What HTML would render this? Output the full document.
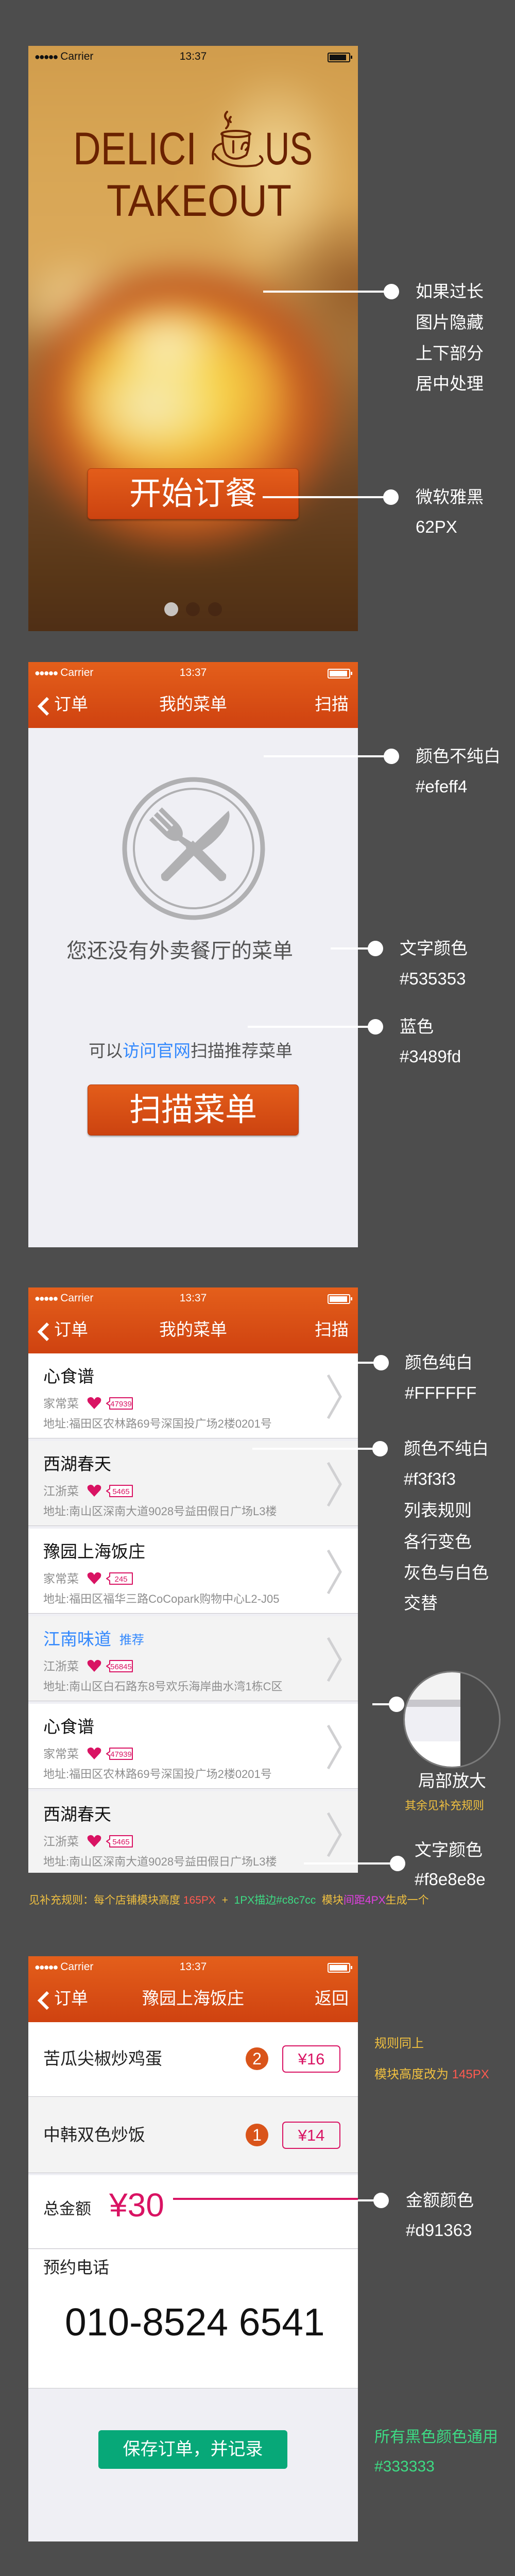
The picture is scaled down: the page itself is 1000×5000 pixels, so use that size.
<!DOCTYPE html>
<html><head><meta charset="utf-8">
<style>
*{margin:0;padding:0;box-sizing:border-box}
body{width:1000px;height:5000px;background:#4d4d4d;position:relative;overflow:hidden;font-family:"Liberation Sans","Noto Sans CJK SC",sans-serif}
.a{position:absolute}
.ph{position:absolute;left:55px;width:640px;height:1136px;overflow:hidden}
.t{position:absolute;white-space:nowrap}
.ann{position:absolute;white-space:nowrap;color:#fff;font-size:33px;line-height:40px;height:40px}
.ln{position:absolute;height:4px;background:#fff}
.dot{position:absolute;width:30px;height:30px;border-radius:50%;background:#fff}
.nav{position:absolute;left:0;top:0;width:640px;height:128px;background:linear-gradient(#e45f1b,#cf4210)}
.st{position:absolute;top:10px;height:22px;line-height:22px;font-size:21px;color:#fff}
.navt{position:absolute;top:62px;height:40px;line-height:40px;font-size:33px;color:#fff}
.btn{position:absolute;border-radius:7px;background:linear-gradient(#e35d1a,#cc4310);border:1px solid #b53a0c;box-shadow:0 2px 3px rgba(0,0,0,.35);color:#fff;text-align:center}
.row{position:absolute;left:0;width:640px;height:165px;border-bottom:1px solid #c8c7cc}
.rt{position:absolute;left:29px;top:25px;font-size:33px;line-height:40px;color:#111}
.rc{position:absolute;left:29px;top:84px;font-size:23px;line-height:26px;color:#8e8e8e}
.ra{position:absolute;left:29px;top:124px;font-size:22px;line-height:26px;color:#8e8e8e;white-space:nowrap}
</style></head><body>

<!-- ================= SCREEN 1 ================= -->
<div class="ph" style="top:89px;background:#8a5a2a">
  <div class="a" style="left:-60px;top:-60px;width:760px;height:1260px;filter:blur(26px);
   background:
   radial-gradient(ellipse 120px 90px at 330px 640px,rgba(250,240,200,.9),rgba(250,240,200,0)),
   radial-gradient(ellipse 150px 110px at 300px 760px,rgba(245,236,200,.85),rgba(245,236,200,0)),
   radial-gradient(ellipse 230px 190px at 340px 730px,#fae05a 0%,#f6cf45 45%,rgba(240,170,50,0) 100%),
   radial-gradient(ellipse 330px 300px at 360px 760px,#eeaa35 0%,#e28a2c 55%,#c0561e 75%,rgba(110,50,20,0) 100%),
   radial-gradient(ellipse 140px 200px at 540px 300px,rgba(250,230,170,.8),rgba(250,230,170,0)),
   radial-gradient(ellipse 140px 100px at 150px 560px,rgba(245,215,150,.9),rgba(245,215,150,0)),
   radial-gradient(ellipse 200px 160px at 700px 520px,rgba(120,60,20,.7),rgba(120,60,20,0)),
   linear-gradient(#cf9a4a 0%,#d8a655 22%,#dba95a 38%,#9a6a36 55%,#6b4424 72%,#5a3818 85%,#4a2a14 100%)"></div>
  <div class="st" style="left:12px;color:#111"><span style="letter-spacing:-2px;font-size:18px">●●●●●</span> Carrier</div>
  <div class="st" style="left:290px;width:60px;text-align:center;color:#111">13:37</div>
  <div class="a" style="left:581px;top:13px;width:44px;height:19px;border:2px solid #111;border-radius:3px;padding:2px"><div style="width:32px;height:11px;background:#111"></div></div>
  <div class="a" style="left:626px;top:19px;width:3px;height:6px;background:#111"></div>
  <svg class="a" style="left:0;top:0" width="640" height="400">
    <g fill="#6a2200" font-family="Liberation Sans, sans-serif">
      <text x="87" y="230" font-size="89" textLength="240" lengthAdjust="spacingAndGlyphs">DELICI</text>
      <text x="459" y="230" font-size="89" textLength="93" lengthAdjust="spacingAndGlyphs">US</text>
      <text x="152" y="330" font-size="86" textLength="359" lengthAdjust="spacingAndGlyphs">TAKEOUT</text>
    </g>
    <g fill="none" stroke="#6a2200" stroke-width="4" stroke-linecap="round">
      <path d="M386 128 q-8 8 0 16 q6 8 -2 16"/>
      <path d="M393 138 q-5 5 0 10"/>
      <ellipse cx="403" cy="171" rx="28" ry="6"/>
      <path d="M377 172 q0 30 8 40 q16 14 38 0 q6 -12 6 -40"/>
      <path d="M398 185 v22"/>
      <path d="M414 200 q2 -14 10 -12 q8 4 -2 14"/>
      <path d="M375 190 q-20 6 -16 30 M362 210 q20 30 80 22 q20 -8 8 -18"/>
    </g>
  </svg>
  <div class="btn" style="left:115px;top:820px;width:410px;height:99px;font-size:62px;line-height:97px">开始订餐</div>
  <div class="a" style="left:264px;top:1080px;width:27px;height:27px;border-radius:50%;background:#c8c4c0"></div>
  <div class="a" style="left:306px;top:1080px;width:27px;height:27px;border-radius:50%;background:rgba(60,30,15,.5)"></div>
  <div class="a" style="left:349px;top:1080px;width:27px;height:27px;border-radius:50%;background:rgba(60,30,15,.5)"></div>
</div>
<div class="ln" style="left:511px;top:564px;width:250px"></div><div class="dot" style="left:745px;top:551px"></div>
<div class="ann" style="left:807px;top:546px">如果过长</div>
<div class="ann" style="left:807px;top:606px">图片隐藏</div>
<div class="ann" style="left:807px;top:666px">上下部分</div>
<div class="ann" style="left:807px;top:725px">居中处理</div>
<div class="ln" style="left:510px;top:963px;width:250px"></div><div class="dot" style="left:744px;top:950px"></div>
<div class="ann" style="left:807px;top:945px">微软雅黑</div>
<div class="ann" style="left:807px;top:1003px">62PX</div>

<!-- ================= SCREEN 2 ================= -->
<div class="ph" style="top:1285px;background:#efeff4">
  <div class="nav"></div>
  <div class="st" style="left:12px"><span style="letter-spacing:-2px;font-size:18px">●●●●●</span> Carrier</div>
  <div class="st" style="left:290px;width:60px;text-align:center">13:37</div>
  <div class="a" style="left:581px;top:13px;width:44px;height:19px;border:2px solid #fff;border-radius:3px;padding:2px"><div style="width:34px;height:11px;background:#fff"></div></div>
  <div class="a" style="left:626px;top:19px;width:3px;height:6px;background:#fff"></div>
  <svg class="a" style="left:14px;top:66px" width="30" height="40"><path d="M24 4 L8 20 L24 36" fill="none" stroke="#fff" stroke-width="6"/></svg>
  <div class="navt" style="left:50px">订单</div>
  <div class="navt" style="left:250px;width:140px;text-align:center">我的菜单</div>
  <div class="navt" style="right:18px">扫描</div>
  <svg class="a" style="left:181px;top:222px" width="280" height="280" viewBox="-140 -140 280 280">
    <circle r="134" fill="none" stroke="#b0b0b2" stroke-width="9"/>
    <circle r="116" fill="none" stroke="#b0b0b2" stroke-width="4"/>
    <g fill="#b0b0b2">
      <g transform="rotate(45)">
        <path d="M-4 -100 C 20 -90 22 -40 14 -8 L 4 -4 L -6 -4 Z"/>
        <path d="M-10 0 H10 L9 80 Q0 92 -9 80 Z"/>
      </g>
      <g transform="rotate(-45)">
        <path d="M-22 -100 h9 v40 h4 v-40 h9 v40 h4 v-40 h9 v40 q0 22 -12 28 L6 -10 h-14 L-10 -32 q-12 -6 -12 -28 Z"/>
        <path d="M-10 -12 H10 L9 80 Q0 92 -9 80 Z"/>
      </g>
    </g>
  </svg>
  <div class="t" style="left:74px;top:540px;font-size:40px;line-height:42px;color:#535353">您还没有外卖餐厅的菜单</div>
  <div class="t" style="left:117px;top:737px;font-size:33px;line-height:36px;color:#535353">可以<span style="color:#3489fd">访问官网</span>扫描推荐菜单</div>
  <div class="btn" style="left:115px;top:820px;width:410px;height:99px;font-size:62px;line-height:97px">扫描菜单</div>
</div>
<div class="ln" style="left:512px;top:1466px;width:250px"></div><div class="dot" style="left:745px;top:1453px"></div>
<div class="ann" style="left:807px;top:1448px">颜色不纯白</div>
<div class="ann" style="left:807px;top:1507px">#efeff4</div>
<div class="ln" style="left:642px;top:1839px;width:90px"></div><div class="dot" style="left:714px;top:1826px"></div>
<div class="ann" style="left:776px;top:1821px">文字颜色</div>
<div class="ann" style="left:776px;top:1880px">#535353</div>
<div class="ln" style="left:481px;top:1991px;width:250px"></div><div class="dot" style="left:714px;top:1978px"></div>
<div class="ann" style="left:776px;top:1973px">蓝色</div>
<div class="ann" style="left:776px;top:2031px">#3489fd</div>

<!-- ================= SCREEN 3 ================= -->
<div class="ph" style="top:2499px;background:#efeff4">
  <div class="nav"></div>
  <div class="st" style="left:12px"><span style="letter-spacing:-2px;font-size:18px">●●●●●</span> Carrier</div>
  <div class="st" style="left:290px;width:60px;text-align:center">13:37</div>
  <div class="a" style="left:581px;top:13px;width:44px;height:19px;border:2px solid #fff;border-radius:3px;padding:2px"><div style="width:34px;height:11px;background:#fff"></div></div>
  <div class="a" style="left:626px;top:19px;width:3px;height:6px;background:#fff"></div>
  <svg class="a" style="left:14px;top:66px" width="30" height="40"><path d="M24 4 L8 20 L24 36" fill="none" stroke="#fff" stroke-width="6"/></svg>
  <div class="navt" style="left:50px">订单</div>
  <div class="navt" style="left:250px;width:140px;text-align:center">我的菜单</div>
  <div class="navt" style="right:18px">扫描</div>

  <div class="row" style="top:128px;background:#fff">
    <div class="rt">心食谱</div><div class="rc">家常菜</div>
    <svg class="a" style="left:114px;top:84px" width="90" height="26"><path d="M14 24 L2 11 Q-2 3 6 1 Q11 0 14 6 Q17 0 22 1 Q30 3 26 11 Z" fill="#d91363"/><path d="M44 2 H88 V24 H44 V17 L38 13 L44 9 Z" fill="#fff" stroke="#d91363" stroke-width="2" stroke-linejoin="round"/><text x="66" y="19" font-size="15" fill="#d91363" text-anchor="middle" font-family="Liberation Sans">47939</text></svg>
    <div class="ra">地址:福田区农林路69号深国投广场2楼0201号</div>
    <svg class="a" style="left:578px;top:40px" width="34" height="90"><path d="M4 2 L28 44 L4 86" fill="none" stroke="#d0d0d2" stroke-width="5"/></svg>
  </div>
  <div class="row" style="top:298px;background:#f3f3f3">
    <div class="rt">西湖春天</div><div class="rc">江浙菜</div>
    <svg class="a" style="left:114px;top:84px" width="90" height="26"><path d="M14 24 L2 11 Q-2 3 6 1 Q11 0 14 6 Q17 0 22 1 Q30 3 26 11 Z" fill="#d91363"/><path d="M44 2 H88 V24 H44 V17 L38 13 L44 9 Z" fill="#fff" stroke="#d91363" stroke-width="2" stroke-linejoin="round"/><text x="66" y="19" font-size="15" fill="#d91363" text-anchor="middle" font-family="Liberation Sans">5465</text></svg>
    <div class="ra">地址:南山区深南大道9028号益田假日广场L3楼</div>
    <svg class="a" style="left:578px;top:40px" width="34" height="90"><path d="M4 2 L28 44 L4 86" fill="none" stroke="#d0d0d2" stroke-width="5"/></svg>
  </div>
  <div class="row" style="top:468px;background:#fff">
    <div class="rt">豫园上海饭庄</div><div class="rc">家常菜</div>
    <svg class="a" style="left:114px;top:84px" width="90" height="26"><path d="M14 24 L2 11 Q-2 3 6 1 Q11 0 14 6 Q17 0 22 1 Q30 3 26 11 Z" fill="#d91363"/><path d="M44 2 H88 V24 H44 V17 L38 13 L44 9 Z" fill="#fff" stroke="#d91363" stroke-width="2" stroke-linejoin="round"/><text x="66" y="19" font-size="15" fill="#d91363" text-anchor="middle" font-family="Liberation Sans">245</text></svg>
    <div class="ra">地址:福田区福华三路CoCopark购物中心L2-J05</div>
    <svg class="a" style="left:578px;top:40px" width="34" height="90"><path d="M4 2 L28 44 L4 86" fill="none" stroke="#d0d0d2" stroke-width="5"/></svg>
  </div>
  <div class="row" style="top:638px;background:#f3f3f3">
    <div class="rt" style="color:#3489fd">江南味道 <span style="font-size:24px;vertical-align:2px">&nbsp;推荐</span></div><div class="rc">江浙菜</div>
    <svg class="a" style="left:114px;top:84px" width="90" height="26"><path d="M14 24 L2 11 Q-2 3 6 1 Q11 0 14 6 Q17 0 22 1 Q30 3 26 11 Z" fill="#d91363"/><path d="M44 2 H88 V24 H44 V17 L38 13 L44 9 Z" fill="#fff" stroke="#d91363" stroke-width="2" stroke-linejoin="round"/><text x="66" y="19" font-size="15" fill="#d91363" text-anchor="middle" font-family="Liberation Sans">56845</text></svg>
    <div class="ra">地址:南山区白石路东8号欢乐海岸曲水湾1栋C区</div>
    <svg class="a" style="left:578px;top:40px" width="34" height="90"><path d="M4 2 L28 44 L4 86" fill="none" stroke="#d0d0d2" stroke-width="5"/></svg>
  </div>
  <div class="row" style="top:808px;background:#fff">
    <div class="rt">心食谱</div><div class="rc">家常菜</div>
    <svg class="a" style="left:114px;top:84px" width="90" height="26"><path d="M14 24 L2 11 Q-2 3 6 1 Q11 0 14 6 Q17 0 22 1 Q30 3 26 11 Z" fill="#d91363"/><path d="M44 2 H88 V24 H44 V17 L38 13 L44 9 Z" fill="#fff" stroke="#d91363" stroke-width="2" stroke-linejoin="round"/><text x="66" y="19" font-size="15" fill="#d91363" text-anchor="middle" font-family="Liberation Sans">47939</text></svg>
    <div class="ra">地址:福田区农林路69号深国投广场2楼0201号</div>
    <svg class="a" style="left:578px;top:40px" width="34" height="90"><path d="M4 2 L28 44 L4 86" fill="none" stroke="#d0d0d2" stroke-width="5"/></svg>
  </div>
  <div class="row" style="top:978px;background:#f3f3f3">
    <div class="rt">西湖春天</div><div class="rc">江浙菜</div>
    <svg class="a" style="left:114px;top:84px" width="90" height="26"><path d="M14 24 L2 11 Q-2 3 6 1 Q11 0 14 6 Q17 0 22 1 Q30 3 26 11 Z" fill="#d91363"/><path d="M44 2 H88 V24 H44 V17 L38 13 L44 9 Z" fill="#fff" stroke="#d91363" stroke-width="2" stroke-linejoin="round"/><text x="66" y="19" font-size="15" fill="#d91363" text-anchor="middle" font-family="Liberation Sans">5465</text></svg>
    <div class="ra">地址:南山区深南大道9028号益田假日广场L3楼</div>
    <svg class="a" style="left:578px;top:40px" width="34" height="90"><path d="M4 2 L28 44 L4 86" fill="none" stroke="#d0d0d2" stroke-width="5"/></svg>
  </div>
</div>
<div class="ln" style="left:695px;top:2643px;width:50px"></div><div class="dot" style="left:725px;top:2630px"></div>
<div class="ann" style="left:786px;top:2625px">颜色纯白</div>
<div class="ann" style="left:786px;top:2684px">#FFFFFF</div>
<div class="ln" style="left:490px;top:2810px;width:250px"></div><div class="dot" style="left:723px;top:2797px"></div>
<div class="ann" style="left:784px;top:2792px">颜色不纯白</div>
<div class="ann" style="left:784px;top:2851px">#f3f3f3</div>
<div class="ann" style="left:784px;top:2912px">列表规则</div>
<div class="ann" style="left:784px;top:2973px">各行变色</div>
<div class="ann" style="left:784px;top:3033px">灰色与白色</div>
<div class="ann" style="left:784px;top:3092px">交替</div>
<div class="a" style="left:783px;top:3243px;width:189px;height:189px;border-radius:50%;overflow:hidden;border:3px solid #7a7a7a;background:#4a4a4a">
  <div class="a" style="left:0;top:0;width:108px;height:53px;background:#f3f3f3"></div>
  <div class="a" style="left:0;top:53px;width:108px;height:14px;background:#c8c7cc"></div>
  <div class="a" style="left:0;top:67px;width:108px;height:67px;background:#efeff4"></div>
  <div class="a" style="left:0;top:134px;width:108px;height:60px;background:#fff"></div>
</div>
<div class="ln" style="left:723px;top:3306px;width:50px"></div><div class="dot" style="left:755px;top:3293px"></div>
<div class="ann" style="left:812px;top:3437px">局部放大</div>
<div class="t" style="left:786px;top:3492px;font-size:22px;line-height:26px;color:#f0c040">其余见补充规则</div>
<div class="ln" style="left:590px;top:3615px;width:180px"></div><div class="dot" style="left:757px;top:3602px"></div>
<div class="ann" style="left:805px;top:3571px">文字颜色</div>
<div class="ann" style="left:805px;top:3628px">#f8e8e8e</div>
<div class="t" style="left:56px;top:3676px;font-size:21px;line-height:26px;color:#f0c040">见补充规则：每个店铺模块高度 <span style="color:#ff5a50">165PX</span> &nbsp;+ &nbsp;<span style="color:#3ddc84">1PX描边#c8c7cc</span> &nbsp;模块<span style="color:#e040e0">间距4PX</span>生成一个</div>

<!-- ================= SCREEN 4 ================= -->
<div class="ph" style="top:3797px;background:#efeff4">
  <div class="nav"></div>
  <div class="st" style="left:12px"><span style="letter-spacing:-2px;font-size:18px">●●●●●</span> Carrier</div>
  <div class="st" style="left:290px;width:60px;text-align:center">13:37</div>
  <div class="a" style="left:581px;top:13px;width:44px;height:19px;border:2px solid #fff;border-radius:3px;padding:2px"><div style="width:34px;height:11px;background:#fff"></div></div>
  <div class="a" style="left:626px;top:19px;width:3px;height:6px;background:#fff"></div>
  <svg class="a" style="left:14px;top:66px" width="30" height="40"><path d="M24 4 L8 20 L24 36" fill="none" stroke="#fff" stroke-width="6"/></svg>
  <div class="navt" style="left:50px">订单</div>
  <div class="navt" style="left:210px;width:220px;text-align:center">豫园上海饭庄</div>
  <div class="navt" style="right:18px">返回</div>

  <div class="a" style="left:0;top:128px;width:640px;height:145px;background:#fff;border-bottom:1px solid #c8c7cc">
    <div class="t" style="left:29px;top:51px;font-size:33px;line-height:40px;color:#222">苦瓜尖椒炒鸡蛋</div>
    <div class="a" style="left:422px;top:49px;width:44px;height:44px;border-radius:50%;background:#d9541a;color:#fff;font-size:32px;line-height:44px;text-align:center">2</div>
    <div class="a" style="left:493px;top:45px;width:113px;height:53px;border:2px solid #d91363;border-radius:7px;color:#d91363;font-size:31px;line-height:49px;text-align:center">¥16</div>
  </div>
  <div class="a" style="left:0;top:273px;width:640px;height:148px;background:#f3f3f3;border-bottom:1px solid #c8c7cc">
    <div class="t" style="left:29px;top:54px;font-size:33px;line-height:40px;color:#222">中韩双色炒饭</div>
    <div class="a" style="left:422px;top:52px;width:44px;height:44px;border-radius:50%;background:#d9541a;color:#fff;font-size:32px;line-height:44px;text-align:center">1</div>
    <div class="a" style="left:493px;top:48px;width:113px;height:53px;border:2px solid #d91363;border-radius:7px;color:#d91363;font-size:31px;line-height:49px;text-align:center">¥14</div>
  </div>
  <div class="a" style="left:0;top:425px;width:640px;height:143px;background:#fff;border-bottom:1px solid #c8c7cc">
    <div class="t" style="left:29px;top:46px;font-size:31px;line-height:40px;color:#222">总金额</div>
    <div class="t" style="left:157px;top:20px;font-size:64px;line-height:76px;color:#d91363">¥30</div>
    <div class="a" style="left:281px;top:44px;width:359px;height:4px;background:#d91363"></div>
  </div>
  <div class="a" style="left:0;top:569px;width:640px;height:270px;background:#fff;border-bottom:1px solid #c8c7cc">
    <div class="t" style="left:29px;top:15px;font-size:32px;line-height:40px;color:#222">预约电话</div>
    <div class="t" style="left:71px;top:98px;font-size:75px;line-height:86px;color:#111">010-8524 6541</div>
  </div>
  <div class="a" style="left:136px;top:920px;width:367px;height:75px;border-radius:6px;background:#07a878;color:#fff;font-size:34px;line-height:75px;text-align:center">保存订单，并记录</div>
</div>
<div class="t" style="left:727px;top:3953px;font-size:24px;line-height:28px;color:#f0c040">规则同上</div>
<div class="t" style="left:727px;top:4013px;font-size:24px;line-height:28px;color:#f0c040">模块高度改为 <span style="color:#ff5a50">145PX</span></div>
<div class="ln" style="left:695px;top:4269px;width:50px"></div><div class="dot" style="left:725px;top:4256px"></div>
<div class="ann" style="left:788px;top:4251px">金额颜色</div>
<div class="ann" style="left:788px;top:4309px">#d91363</div>
<div class="t" style="left:727px;top:4713px;font-size:30px;line-height:36px;color:#3ddc84">所有黑色颜色通用</div>
<div class="t" style="left:727px;top:4770px;font-size:30px;line-height:36px;color:#3ddc84">#333333</div>
</body></html>
